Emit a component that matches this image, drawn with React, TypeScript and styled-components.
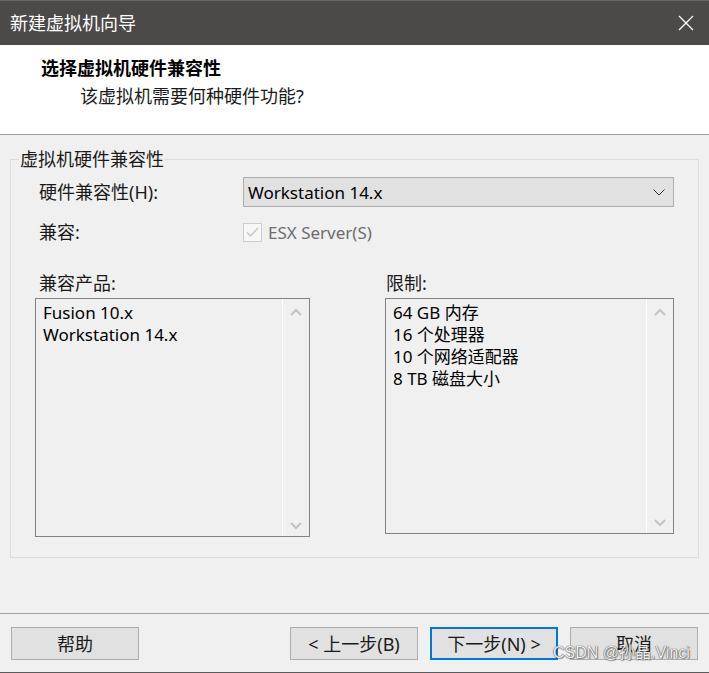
import * as React from 'react';
import styled, { createGlobalStyle } from 'styled-components';

const GlobalStyle = createGlobalStyle`
  html, body {
    margin: 0;
    padding: 0;
    background: #f0f0f0;
  }
  body {
    font-family: 'Noto Sans', 'Noto Sans CJK SC', sans-serif;
    font-size: 18px;
    color: #000;
  }
`;

const Window = styled.div`
  position: relative;
  width: 709px;
  height: 673px;
  display: flex;
  flex-direction: column;
  background: #f0f0f0;
  overflow: hidden;
`;

const TitleBar = styled.div`
  height: 45px;
  flex: none;
  display: flex;
  align-items: center;
  justify-content: space-between;
  padding: 0 0 0 10px;
  background: #4b4a48;
  border-top: 1px solid #6a6968;
  box-sizing: border-box;
  color: #fff;
`;

const TitleText = styled.span`
  font-size: 18px;
  line-height: 20px;
`;

const CloseButton = styled.div`
  width: 46px;
  height: 44px;
  display: flex;
  align-items: center;
  justify-content: center;
`;

const Header = styled.div`
  height: 90px;
  flex: none;
  box-sizing: border-box;
  background: #fff;
  border-bottom: 1px solid #a0a0a0;
  padding: 13px 0 0 41px;
`;

const Heading = styled.div`
  font-weight: 700;
  font-size: 18px;
  line-height: 20px;
`;

const SubHeading = styled.div`
  margin: 8px 0 0 39px;
  font-size: 18px;
  line-height: 20px;
  color: #1a1a1a;
`;

const Body = styled.div`
  flex: 1;
  padding: 14px 10px 0 10px;
`;

const GroupBox = styled.fieldset`
  margin: 0;
  padding: 0 24px 20px 24px;
  border: 1px solid #dcdcdc;
  min-width: 0;
`;

const Legend = styled.legend`
  padding: 0 1px;
  margin-left: -16px;
  font-size: 18px;
  line-height: 20px;
  color: #1a1a1a;
`;

const FormGrid = styled.div`
  display: grid;
  grid-template-columns: 208px 1fr;
  grid-auto-rows: 30px;
  row-gap: 10px;
  margin-top: 8px;
  align-items: center;
`;

const Label = styled.div<{ $indent?: number }>`
  padding-left: ${(p) => p.$indent ?? 4}px;
  font-size: 18px;
  line-height: 20px;
  color: #1a1a1a;
`;

const Select = styled.div`
  height: 30px;
  box-sizing: border-box;
  display: flex;
  align-items: center;
  justify-content: space-between;
  padding: 0 8px 0 4px;
  background: #e1e1e1;
  border: 1px solid #adadad;
  font-size: 17px;
`;

const CheckRow = styled.div`
  display: flex;
  align-items: center;
  gap: 6px;
  color: #6d6d6d;
  font-size: 17px;
`;

const CheckBox = styled.div`
  width: 19px;
  height: 19px;
  box-sizing: border-box;
  border: 1px solid #cccccc;
  background: #f7f7f7;
  display: flex;
  align-items: center;
  justify-content: center;
`;

const ListsGrid = styled.div`
  display: grid;
  grid-template-columns: 275px 1fr;
  column-gap: 75px;
  margin-top: 26px;
  align-items: start;
`;

const ListColumn = styled.div`
  display: flex;
  flex-direction: column;
  gap: 5px;
`;

const ListBox = styled.div<{ $height: number }>`
  height: ${(p) => p.$height}px;
  box-sizing: border-box;
  border: 1px solid #828282;
  background: #f0f0f0;
  display: flex;
`;

const ListItems = styled.div`
  flex: 1;
  padding: 3px 7px;
`;

const ListItem = styled.div`
  font-size: 17px;
  line-height: 22px;
  white-space: nowrap;
`;

const ScrollTrack = styled.div`
  width: 26px;
  flex: none;
  border-left: 1px solid #fff;
  display: flex;
  flex-direction: column;
  justify-content: space-between;
  align-items: center;
  padding: 9px 0 6px;
`;

const Footer = styled.div`
  height: 60px;
  flex: none;
  box-sizing: border-box;
  border-top: 1px solid #a0a0a0;
  border-bottom: 1px solid #5a5a5a;
  display: flex;
  align-items: flex-start;
  gap: 12px;
  padding: 13px 11px 0 11px;
`;

const Button = styled.div<{ $primary?: boolean; $push?: boolean }>`
  width: 128px;
  height: 33px;
  box-sizing: border-box;
  display: flex;
  align-items: center;
  justify-content: center;
  background: #e1e1e1;
  border: ${(p) => (p.$primary ? '2px solid #0078d7' : '1px solid #adadad')};
  margin-left: ${(p) => (p.$push ? 'auto' : '0')};
  font-size: 18px;
  line-height: 20px;
  color: #1a1a1a;
`;

// CSDN watermark stamped over the bottom-right corner of the screenshot
const Watermark = styled.div`
  position: absolute;
  left: 553px;
  top: 643px;
  font-family: 'Liberation Sans', 'Noto Sans CJK SC', sans-serif;
  font-size: 16px;
  line-height: 20px;
  color: rgba(255, 255, 255, 0.92);
  text-shadow: 0 0 1px #555, 0 0 1px #555, 1px 1px 1px rgba(0, 0, 0, 0.35);
  white-space: nowrap;
  pointer-events: none;
`;

const Chevron: React.FC<{ up?: boolean }> = ({ up }) => (
  <svg width="12" height="8" viewBox="0 0 12 8">
    <path
      d={up ? 'M1 7 L6 2 L11 7' : 'M1 1 L6 6 L11 1'}
      fill="none"
      stroke="#c4c4c4"
      strokeWidth="2.2"
    />
  </svg>
);

const ScrollBar: React.FC = () => (
  <ScrollTrack>
    <Chevron up />
    <Chevron />
  </ScrollTrack>
);

const limits = ['64 GB 内存', '16 个处理器', '10 个网络适配器', '8 TB 磁盘大小'];
const products = ['Fusion 10.x', 'Workstation 14.x'];

const App: React.FC = () => (
  <>
    <GlobalStyle />
    <Window>
      <TitleBar>
        <TitleText>新建虚拟机向导</TitleText>
        <CloseButton>
          <svg width="16" height="16" viewBox="0 0 16 16">
            <path d="M1 1 L15 15 M15 1 L1 15" stroke="#fff" strokeWidth="1.3" />
          </svg>
        </CloseButton>
      </TitleBar>
      <Header>
        <Heading>选择虚拟机硬件兼容性</Heading>
        <SubHeading>该虚拟机需要何种硬件功能?</SubHeading>
      </Header>
      <Body>
        <GroupBox>
          <Legend>虚拟机硬件兼容性</Legend>
          <FormGrid>
            <Label>硬件兼容性(H):</Label>
            <Select>
              <span>Workstation 14.x</span>
              <svg width="12" height="7" viewBox="0 0 12 7">
                <path d="M0.5 0.5 L6 6 L11.5 0.5" fill="none" stroke="#333" strokeWidth="1" />
              </svg>
            </Select>
            <Label>兼容:</Label>
            <CheckRow>
              <CheckBox>
                <svg width="13" height="11" viewBox="0 0 13 11">
                  <path d="M1 5.5 L4.5 9 L12 1" fill="none" stroke="#c8c8c8" strokeWidth="1.4" />
                </svg>
              </CheckBox>
              <span>ESX Server(S)</span>
            </CheckRow>
          </FormGrid>
          <ListsGrid>
            <ListColumn>
              <Label>兼容产品:</Label>
              <ListBox $height={239}>
                <ListItems>
                  {products.map((p) => (
                    <ListItem key={p}>{p}</ListItem>
                  ))}
                </ListItems>
                <ScrollBar />
              </ListBox>
            </ListColumn>
            <ListColumn>
              <Label $indent={1}>限制:</Label>
              <ListBox $height={236}>
                <ListItems>
                  {limits.map((l) => (
                    <ListItem key={l}>{l}</ListItem>
                  ))}
                </ListItems>
                <ScrollBar />
              </ListBox>
            </ListColumn>
          </ListsGrid>
        </GroupBox>
      </Body>
      <Footer>
        <Button>帮助</Button>
        <Button $push>&lt; 上一步(B)</Button>
        <Button $primary>下一步(N) &gt;</Button>
        <Button>取消</Button>
      </Footer>
      <Watermark>CSDN @孙晶.Vinci</Watermark>
    </Window>
  </>
);

export default App;
